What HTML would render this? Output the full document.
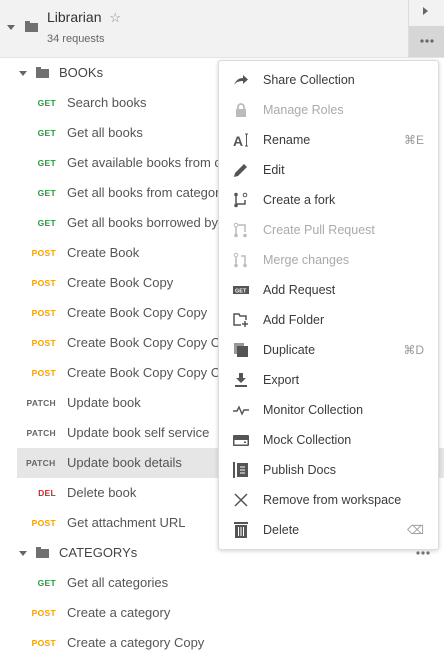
<!DOCTYPE html>
<html><head><style>
body{margin:0;width:444px;height:656px;overflow:hidden;background:#fff;font-family:"Liberation Sans",sans-serif;position:relative;color:#505050}
.hdr{position:absolute;left:0;top:0;width:444px;height:57px;background:#f2f2f2;border-bottom:1px solid #e4e4e4}
.side{position:absolute;left:408px;top:0;width:36px;height:57px;border-left:1px solid #ddd;background:#f2f2f2}
.dots{position:absolute;left:409px;top:26px;width:35px;height:31px;background:#d6d6d6}
.row{position:absolute;left:0;width:444px;height:30px;line-height:30px;font-size:13px}
.m{position:absolute;right:388px;font-size:8.5px;font-weight:bold;letter-spacing:.3px}
.t{position:absolute;left:67px;color:#555}
.get{color:#1f9d3d}.post{color:#f5a200}.patch{color:#666}.del{color:#e02020}
.tri{position:absolute;width:0;height:0;border-left:4px solid transparent;border-right:4px solid transparent;border-top:5px solid #666}
.fold{position:absolute;width:13px;height:9px;background:#707070}
.fold:before{content:"";position:absolute;left:0;top:-2px;width:5px;height:2px;background:#707070}
.menu{position:absolute;left:218px;top:60px;width:219px;height:488px;background:#fff;border:1px solid #ddd;border-radius:3px;box-shadow:0 1px 4px rgba(0,0,0,.18)}
.mi{position:absolute;left:0;width:219px;height:30px;line-height:30px;font-size:12.5px;color:#3a3a3a}
.mi .l{position:absolute;left:44px}
.mi .k{position:absolute;right:14px;color:#999;font-size:12px}
.mi.dis{color:#aaa}
.ic{position:absolute;left:14px;top:7px;width:16px;height:16px}
</style></head><body>
<div class="hdr"></div>
<div class="tri" style="left:7px;top:25px"></div>
<div class="fold" style="left:25px;top:23px"></div>
<div style="position:absolute;left:47px;top:9px;font-size:14px;color:#333">Librarian <span style="color:#888;font-size:13px;margin-left:4px">☆</span></div>
<div style="position:absolute;left:47px;top:33px;font-size:11px;color:#666">34 requests</div>
<div class="side"></div>
<div style="position:absolute;left:423px;top:7px;width:0;height:0;border-top:4px solid transparent;border-bottom:4px solid transparent;border-left:5px solid #666"></div>
<div class="dots"><svg width="35" height="31"><circle cx="13" cy="15" r="1.6" fill="#666"/><circle cx="18" cy="15" r="1.6" fill="#666"/><circle cx="23" cy="15" r="1.6" fill="#666"/></svg></div>

<div class="row" style="top:58px"><div class="tri" style="left:19px;top:13px"></div><div class="fold" style="left:36px;top:11px"></div><span class="t" style="left:59px;color:#444">BOOKs</span></div>
<div class="row" style="top:88px"><span class="m get">GET</span><span class="t">Search books</span></div>
<div class="row" style="top:118px"><span class="m get">GET</span><span class="t">Get all books</span></div>
<div class="row" style="top:148px"><span class="m get">GET</span><span class="t">Get available books from category</span></div>
<div class="row" style="top:178px"><span class="m get">GET</span><span class="t">Get all books from category</span></div>
<div class="row" style="top:208px"><span class="m get">GET</span><span class="t">Get all books borrowed by user</span></div>
<div class="row" style="top:238px"><span class="m post">POST</span><span class="t">Create Book</span></div>
<div class="row" style="top:268px"><span class="m post">POST</span><span class="t">Create Book Copy</span></div>
<div class="row" style="top:298px"><span class="m post">POST</span><span class="t">Create Book Copy Copy</span></div>
<div class="row" style="top:328px"><span class="m post">POST</span><span class="t">Create Book Copy Copy Copy</span></div>
<div class="row" style="top:358px"><span class="m post">POST</span><span class="t">Create Book Copy Copy Copy</span></div>
<div class="row" style="top:388px"><span class="m patch">PATCH</span><span class="t">Update book</span></div>
<div class="row" style="top:418px"><span class="m patch">PATCH</span><span class="t">Update book self service</span></div>
<div class="row" style="top:448px;left:17px;width:427px;background:#e6e6e6"><span class="m patch" style="right:auto;left:9px">PATCH</span><span class="t" style="left:50px">Update book details</span></div>
<div class="row" style="top:478px"><span class="m del">DEL</span><span class="t">Delete book</span></div>
<div class="row" style="top:508px"><span class="m post">POST</span><span class="t">Get attachment URL</span></div>
<div class="row" style="top:538px"><div class="tri" style="left:19px;top:13px"></div><div class="fold" style="left:36px;top:11px"></div><span class="t" style="left:59px;color:#444">CATEGORYs</span><svg style="position:absolute;left:414px;top:10px" width="20" height="10"><circle cx="4" cy="5" r="1.6" fill="#777"/><circle cx="9" cy="5" r="1.6" fill="#777"/><circle cx="14" cy="5" r="1.6" fill="#777"/></svg></div>
<div class="row" style="top:568px"><span class="m get">GET</span><span class="t">Get all categories</span></div>
<div class="row" style="top:598px"><span class="m post">POST</span><span class="t">Create a category</span></div>
<div class="row" style="top:628px"><span class="m post">POST</span><span class="t">Create a category Copy</span></div>

<div class="menu">
<div class="mi" style="top:4px"><svg class="ic" viewBox="0 0 16 16"><path d="M1 13C3 8 6 6 10 6V3l5 4.5L10 12V9C6 9 3 10 1 13z" fill="#555"/></svg><span class="l">Share Collection</span></div>
<div class="mi dis" style="top:34px"><svg class="ic" viewBox="0 0 16 16"><path d="M5 7V5a3 3 0 016 0v2" stroke="#bbb" stroke-width="1.8" fill="none"/><rect x="3" y="7" width="10" height="8" fill="#bbb"/></svg><span class="l">Manage Roles</span></div>
<div class="mi" style="top:64px"><svg class="ic" viewBox="0 0 16 16"><text x="0" y="14" font-size="14" font-weight="bold" fill="#555" font-family="Liberation Sans">A</text><path d="M12 2h3M13.5 2v12M12 14h3" stroke="#555" fill="none"/></svg><span class="l">Rename</span><span class="k">⌘E</span></div>
<div class="mi" style="top:94px"><svg class="ic" viewBox="0 0 16 16"><path d="M1 15l1-4L11 2l3 3-9 9z" fill="#555"/></svg><span class="l">Edit</span></div>
<div class="mi" style="top:124px"><svg class="ic" viewBox="0 0 16 16"><circle cx="3" cy="2.5" r="1.8" fill="#555"/><circle cx="3" cy="13.5" r="1.8" fill="#555"/><path d="M3 3v10M3 12h9V8" stroke="#555" stroke-width="1.5" fill="none"/><circle cx="12" cy="3" r="1.8" stroke="#555" fill="none"/></svg><span class="l">Create a fork</span></div>
<div class="mi dis" style="top:154px"><svg class="ic" viewBox="0 0 16 16"><circle cx="3" cy="3" r="1.8" stroke="#bbb" fill="none"/><circle cx="3" cy="13.5" r="1.8" fill="#bbb"/><circle cx="12" cy="13.5" r="1.8" fill="#bbb"/><path d="M3 5v7M5 3h7v7" stroke="#bbb" stroke-width="1.5" fill="none"/></svg><span class="l">Create Pull Request</span></div>
<div class="mi dis" style="top:184px"><svg class="ic" viewBox="0 0 16 16"><circle cx="3" cy="3" r="1.8" stroke="#bbb" fill="none"/><circle cx="3" cy="13.5" r="1.8" fill="#bbb"/><circle cx="12" cy="13.5" r="1.8" fill="#bbb"/><path d="M3 5v7M12 12V4H8" stroke="#bbb" stroke-width="1.5" fill="none"/></svg><span class="l">Merge changes</span></div>
<div class="mi" style="top:214px"><svg class="ic" viewBox="0 0 16 16"><rect x="0" y="4" width="16" height="8" fill="#555"/><text x="2" y="10.5" font-size="5.5" fill="#fff" font-weight="bold" font-family="Liberation Sans">GET</text></svg><span class="l">Add Request</span></div>
<div class="mi" style="top:244px"><svg class="ic" viewBox="0 0 16 16"><path d="M8 13H1V2h5l1 2h6v4" stroke="#555" stroke-width="1.5" fill="none"/><path d="M12 9v6M9 12h6" stroke="#555" stroke-width="1.5"/></svg><span class="l">Add Folder</span></div>
<div class="mi" style="top:274px"><svg class="ic" viewBox="0 0 16 16"><rect x="1" y="1" width="10" height="11" fill="#999"/><rect x="4" y="4" width="11" height="11" fill="#555"/></svg><span class="l">Duplicate</span><span class="k">⌘D</span></div>
<div class="mi" style="top:304px"><svg class="ic" viewBox="0 0 16 16"><path d="M6 1h4v5h3l-5 5-5-5h3z" fill="#555"/><rect x="2" y="13" width="12" height="2" fill="#555"/></svg><span class="l">Export</span></div>
<div class="mi" style="top:334px"><svg class="ic" viewBox="0 0 16 16"><path d="M0 9h4l2-4 3 7 2-4h5" stroke="#555" stroke-width="1.4" fill="none"/></svg><span class="l">Monitor Collection</span></div>
<div class="mi" style="top:364px"><svg class="ic" viewBox="0 0 16 16"><rect x="0" y="3" width="16" height="11" rx="1" fill="#555"/><rect x="1.5" y="8" width="13" height="4.5" fill="#fff"/><rect x="11" y="9.5" width="2" height="1.5" fill="#555"/></svg><span class="l">Mock Collection</span></div>
<div class="mi" style="top:394px"><svg class="ic" viewBox="0 0 16 16"><rect x="0" y="0" width="2" height="16" fill="#555"/><rect x="4" y="1" width="11" height="14" fill="#555"/><path d="M7 5h5M7 8h5M7 11h5" stroke="#fff"/></svg><span class="l">Publish Docs</span></div>
<div class="mi" style="top:424px"><svg class="ic" viewBox="0 0 16 16"><path d="M2 2l12 12M14 2L2 14" stroke="#555" stroke-width="1.5"/></svg><span class="l">Remove from workspace</span></div>
<div class="mi" style="top:454px"><svg class="ic" viewBox="0 0 16 16"><rect x="1" y="0" width="14" height="2" fill="#555"/><rect x="2" y="3" width="12" height="13" fill="#555"/><path d="M5.5 5v9M8 5v9M10.5 5v9" stroke="#fff"/></svg><span class="l">Delete</span><span class="k">⌫</span></div>
</div>
</body></html>
